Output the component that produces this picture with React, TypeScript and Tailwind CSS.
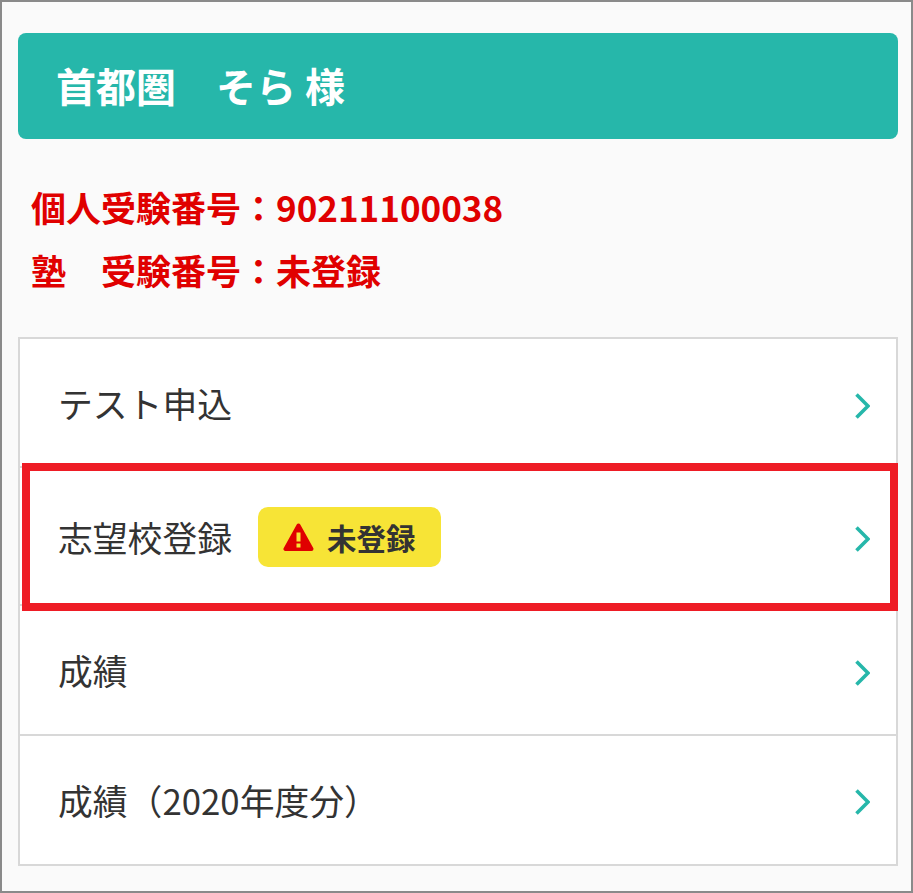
function Chevron({ offset }: { offset: string }) {
  return (
    <svg width="15" height="26" viewBox="0 0 15 26" fill="none" className={`shrink-0 ${offset}`}>
      <path d="M1.5 1.5 L13 13 L1.5 24.5" stroke="#26b7aa" strokeWidth="3.6" />
    </svg>
  );
}

function WarningIcon() {
  return (
    <svg width="31" height="29" viewBox="0 0 31 29" className="mr-[13px] shrink-0">
      <path d="M15.5 2.5 L2.5 26 L28.5 26 Z" fill="#e00000" stroke="#e00000" strokeWidth="4" strokeLinejoin="round" />
      <rect x="13.5" y="9.5" width="4" height="9" fill="#f7e436" />
      <rect x="13.5" y="20.5" width="4" height="4" fill="#f7e436" />
    </svg>
  );
}

function Row({ label, badge, pad, offset, last }: { label: string; badge?: boolean; pad: string; offset: string; last?: boolean }) {
  return (
    <div className={`flex items-center justify-between pl-[38px] pr-[26px] ${pad} ${last ? "" : "border-b-2 border-[#d8d8d8]"}`}>
      <div className="flex items-center">
        <span className="text-[34.8px] leading-[52px] text-[#333]">{label}</span>
        {badge && (
          <span className="ml-[26px] flex h-[60px] w-[183px] items-center rounded-[10px] bg-[#f7e436] pl-[25px] text-[29.5px] font-bold text-[#333]">
            <WarningIcon />
            未登録
          </span>
        )}
      </div>
      <Chevron offset={offset} />
    </div>
  );
}

export default function App() {
  return (
    <div
      className="h-[893px] w-[913px] border-2 border-[#8a8a8a] bg-[#fafafa] pl-[16px] pr-[13px] pt-[31px]"
      style={{ fontFamily: '"Noto Sans CJK JP", "Noto Sans", sans-serif' }}
    >
      <div className="flex h-[106px] items-center rounded-[8px] bg-[#26b7aa] pb-[3px] pl-[38px] text-[40px] font-bold text-white">
        首都圏　そら 様
      </div>

      <div className="mt-[36px] pl-[13px] text-[35px] font-bold leading-[63px] text-[#e00000]">
        <div>個人受験番号：90211100038</div>
        <div>塾　受験番号：未登録</div>
      </div>

      <div className="relative mt-[36px] border-2 border-[#d8d8d8] bg-white">
        <Row label="テスト申込" pad="pt-[38px] pb-[37px]" offset="mt-[5px]" />
        <Row label="志望校登録" pad="pt-[39px] pb-[37px]" offset="mt-[3px]" badge />
        <Row label="成績" pad="py-[38px]" offset="mt-[5px]" />
        <Row label="成績（2020年度分）" pad="py-[38px]" offset="mt-[3px]" last />
        {/* red highlight box drawn over the second row */}
        <div className="absolute left-[2px] top-[124px] h-[148px] w-[876px] border-[8px] border-[#ee1c25]" />
      </div>
    </div>
  );
}
